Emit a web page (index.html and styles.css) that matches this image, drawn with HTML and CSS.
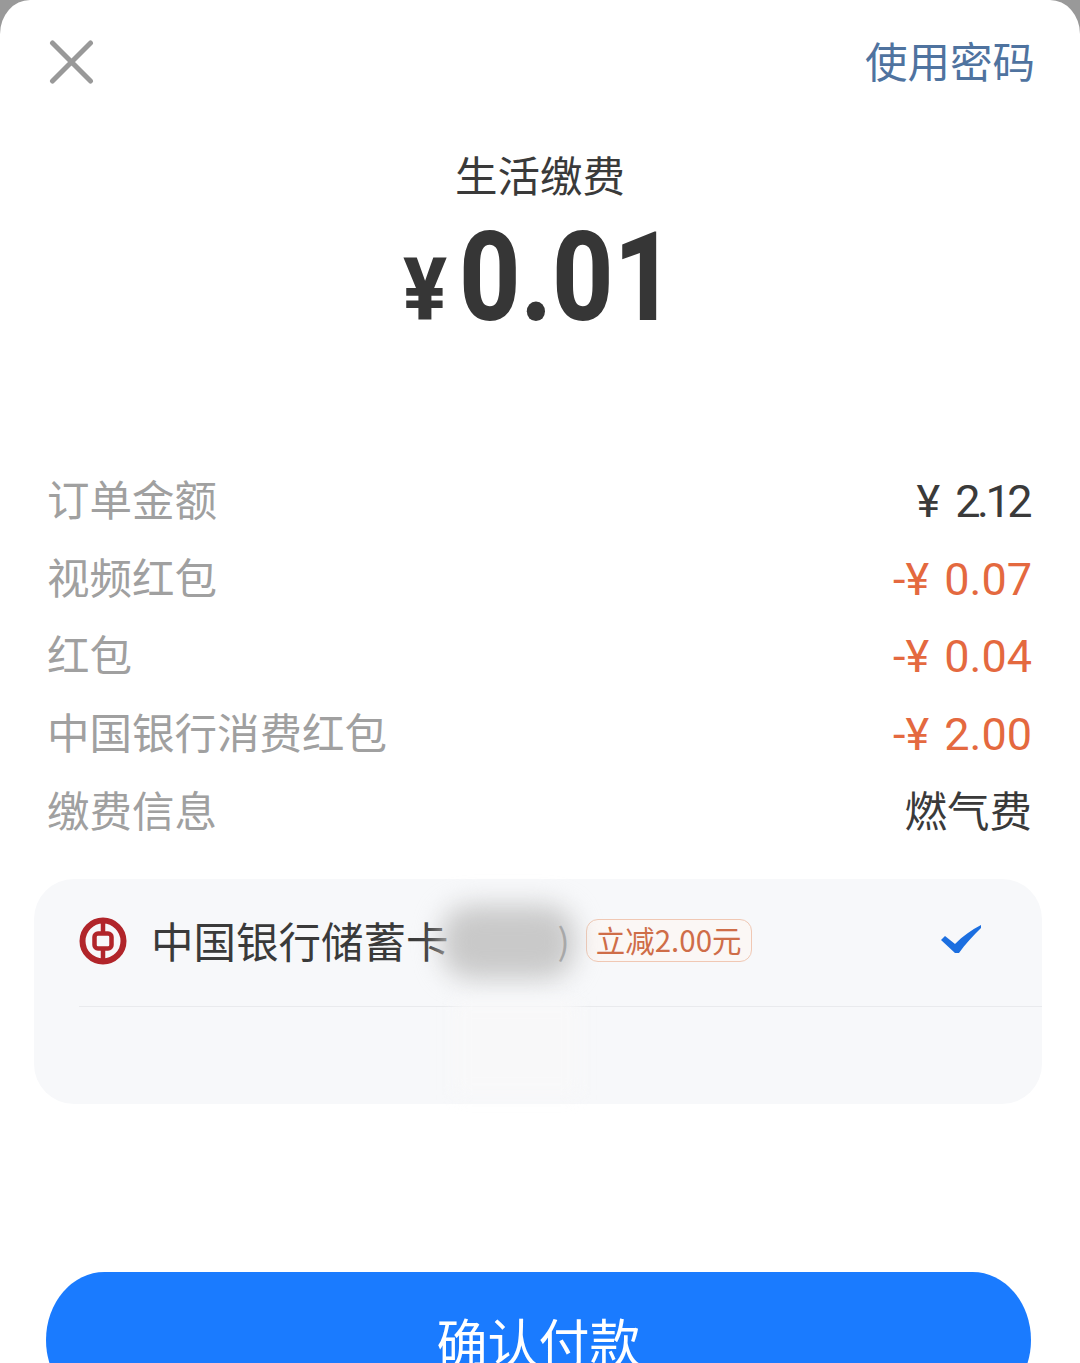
FILE: index.html
```html
<!DOCTYPE html>
<html lang="zh-CN">

<head>
    <meta charset="UTF-8">
    <meta name="viewport" content="width=device-width, initial-scale=1.0">
    <title>确认付款</title>
    <link rel="stylesheet" href="styles.css">
</head>

<body>
    <main class="sheet">
        <header class="top-bar">
            <svg class="close-icon" viewBox="0 0 44 44" aria-label="关闭">
                <path d="M3 3L41 41M41 3L3 41" />
            </svg>
            <span class="use-password">使用密码</span>
        </header>

        <div class="title">生活缴费</div>
        <div class="amount"><span class="amount-yen">¥</span><span class="amount-num">0.01</span></div>

        <ul class="details">
            <li class="detail-row"><span class="detail-label">订单金额</span><span class="detail-value">¥ <span class="tight">2.12</span></span></li>
            <li class="detail-row"><span class="detail-label">视频红包</span><span class="detail-value discount">-¥ 0.07</span></li>
            <li class="detail-row"><span class="detail-label">红包</span><span class="detail-value discount">-¥ 0.04</span></li>
            <li class="detail-row"><span class="detail-label">中国银行消费红包</span><span class="detail-value discount">-¥ 2.00</span></li>
            <li class="detail-row"><span class="detail-label">缴费信息</span><span class="detail-text">燃气费</span></li>
        </ul>

        <section class="pay-card">
            <div class="bank-row">
                <svg class="bank-logo" viewBox="0 0 48 48">
                    <circle cx="24" cy="24" r="20.5" />
                    <rect class="logo-inner" x="15.5" y="16.5" width="17" height="15" rx="3.5" />
                    <path class="logo-inner" d="M24 3V16.5M24 31.5V45" />
                </svg>
                <span class="bank-name">中国银行储蓄卡</span>
                <span class="card-mask"></span>
                <span class="bank-bracket">)</span>
                <span class="discount-tag">立减2.00元</span>
                <svg class="check-icon" viewBox="0 0 40 28">
                    <path d="M0 15L4 11L14 19C22 11 30 5 40 0L40 3C32 11 24 19 18 28L14 28Z" />
                </svg>
            </div>
            <div class="card-more">
                <span class="more-mask"></span>
            </div>
        </section>

        <button class="confirm-btn" type="button"><span class="confirm-text">确认付款</span></button>
    </main>
</body>

</html>
```

FILE: styles.css
```css
/* Reset default margin and padding */
* {
    margin: 0;
    padding: 0;
    box-sizing: border-box;
}

html,
body {
    width: 1080px;
    height: 1363px;
    overflow: hidden;
}

body {
    font-family: "Noto Sans CJK SC", "Noto Sans", sans-serif;
    background-color: #999999;
    color: #333333;
}

/* White bottom sheet */
.sheet {
    height: 1363px;
    padding-top: 32px;
    background-color: #ffffff;
    border-radius: 30px 30px 0 0 / 34px 34px 0 0;
    overflow: hidden;
}

.top-bar {
    display: flex;
    justify-content: space-between;
    align-items: center;
    height: 60px;
    padding: 0 45px 0 49px;
}

.close-icon {
    width: 45px;
    height: 44px;
    fill: none;
    stroke: #999999;
    stroke-width: 5;
    stroke-linecap: round;
}

.use-password {
    padding-bottom: 4px;
    font-size: 42.5px;
    line-height: 60px;
    color: #4f739f;
}

.title {
    margin-top: 57px;
    font-size: 42.5px;
    line-height: 50px;
    text-align: center;
    color: #3a3a3a;
}

/* Big amount */
.amount {
    display: flex;
    justify-content: center;
    align-items: baseline;
    height: 110px;
    margin-top: 24px;
    font-family: "Roboto", sans-serif;
    font-weight: 800;
    line-height: 110px;
    color: #363636;
}

.amount-yen {
    display: inline-block;
    padding-left: 4px;
    font-size: 88px;
    transform: scaleX(0.93);
    transform-origin: 4px 50%;
}

.amount-num {
    display: inline-block;
    width: 222px;
    margin-left: 8px;
    font-size: 124px;
    transform: scaleX(0.86);
    transform-origin: 0 50%;
}

.details {
    margin-top: 128px;
    list-style: none;
}

.detail-row {
    display: flex;
    justify-content: space-between;
    align-items: center;
    height: 77.6px;
    padding: 0 48px 0 47px;
    font-size: 42.5px;
}

.detail-label {
    padding-bottom: 4px;
    color: #a0a0a0;
}

.detail-value {
    padding-top: 4px;
    font-family: "Roboto", "Noto Sans CJK SC", sans-serif;
    font-size: 45px;
    word-spacing: 4px;
    color: #3a3a3a;
}

.detail-text {
    padding-bottom: 4px;
    color: #3a3a3a;
}

.tight {
    margin-right: 3px;
    letter-spacing: -3.5px;
}

.discount {
    color: #e4693f;
}

/* Bank card panel */
.pay-card {
    width: 1008px;
    height: 225px;
    margin: 30px 0 0 34px;
    background-color: #f7f8fa;
    border-radius: 40px;
}

.bank-row {
    display: flex;
    align-items: center;
    height: 128px;
    margin-left: 45px;
    padding-right: 61px;
    border-bottom: 1px solid #e9eaed;
}

.bank-logo {
    flex-shrink: 0;
    width: 48px;
    height: 48px;
    margin-bottom: 2px;
    fill: none;
    stroke: #b1252a;
    stroke-width: 6;
}

.logo-inner {
    stroke-width: 4.5;
}

.bank-name {
    margin-left: 24px;
    padding-bottom: 6px;
    font-size: 42.5px;
    color: #3a3a3a;
}

/* Blurred out card number */
.card-mask {
    position: relative;
    width: 109px;
    height: 50px;
}

.card-mask::after {
    content: "";
    position: absolute;
    top: -12px;
    left: -8px;
    width: 134px;
    height: 74px;
    background-color: #c9c9c9;
    border-radius: 30px;
    filter: blur(13px);
}

.bank-bracket {
    position: relative;
    padding-bottom: 6px;
    font-size: 36px;
    color: #a8a8a8;
}

.discount-tag {
    height: 43px;
    margin: 0 0 4px 16px;
    padding: 0 9px;
    font-size: 29.5px;
    line-height: 39px;
    color: #cf6d48;
    background-color: #fbf7f5;
    border: 1.5px solid #f0c8b4;
    border-radius: 12px;
}

.check-icon {
    width: 40px;
    height: 28px;
    margin: 0 0 7px auto;
    fill: #1c6fe0;
}

.card-more {
    position: relative;
    height: 97px;
}

/* Smudge left on the divider and below it */
.more-mask {
    position: absolute;
    top: -6px;
    left: 420px;
    width: 125px;
    height: 94px;
    background-color: #f8f8f9;
    filter: blur(8px);
}

/* Bottom button, cut off by the window */
.confirm-btn {
    display: block;
    width: 985px;
    height: 136px;
    margin: 168px 0 0 46px;
    border: none;
    border-radius: 60px / 70px;
    background-color: #1a7bff;
    color: #ffffff;
    font-family: inherit;
    font-size: 51px;
    line-height: 136px;
}
```
